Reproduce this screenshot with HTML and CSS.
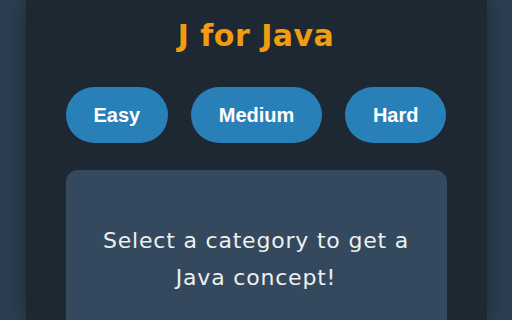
FILE: index.html
```html
<!DOCTYPE html>
<html lang="en">
<head>
    <meta charset="UTF-8">
    <meta name="viewport" content="width=device-width, initial-scale=1.0">
    <title>J for Java</title>
<link rel="stylesheet" href="styles.css">
</head>
<body>
    <div class="container">
        <h1 class="title">J for Java</h1>
        <div class="category_btns">
            <button class="cat_btn">Easy</button>
            <button class="cat_btn">Medium</button>
            <button class="cat_btn">Hard</button>
        </div>
        <div class="concept_box">
            <p class="concept_text">Select a category to get a Java concept!</p>
        </div>
    </div>
</body>
</html>
```

FILE: styles.css
```css
*{
    margin:0;
    box-sizing: border-box;
}
body{
    background-color: #2c3e50;
    font-family: "DejaVu Sans", "Noto Sans", sans-serif;
    color: #ecf0f1;
    height: 320px;
    overflow: hidden;
}
.container{
    width: 461px;
    height: 100%;
    margin: 0 auto;
    padding: 16px 40px 0;
    background-color: #1e2833;
    box-shadow: 0 0 20px rgba(0,0,0,0.35);
}
.title{
    text-align: center;
    color: #f39c12;
    font-size: 30px;
    font-weight: 700;
    letter-spacing: 0.5px;
    line-height: 40px;
}
.category_btns{
    display: flex;
    justify-content: space-between;
    margin-top: 31px;
}
.cat_btn{
    height: 56px;
    padding: 0 28px;
    border: none;
    border-radius: 28px;
    background-color: #2980b9;
    color: #fff;
    font-family: "Liberation Sans", Arial, sans-serif;
    font-size: 20px;
    font-weight: bold;
}
.concept_box{
    margin-top: 27px;
    height: 200px;
    padding: 52px 30px 0;
    background-color: #34495e;
    border-radius: 12px;
}
.concept_text{
    text-align: center;
    font-size: 22px;
    letter-spacing: 0.8px;
    line-height: 37px;
}
```
